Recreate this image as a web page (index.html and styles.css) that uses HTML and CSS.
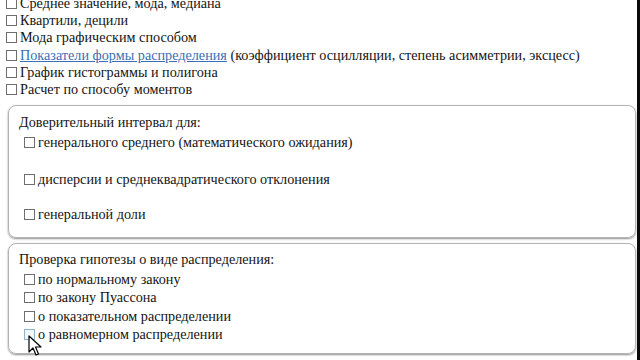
FILE: index.html
```html
<!DOCTYPE html>
<html lang="ru">
<head>
<meta charset="utf-8">
<title>Статистика</title>
<link rel="stylesheet" href="styles.css">
</head>
<body>
<div class="frame">
  <div class="page">
    <ul class="list top">
      <li><span class="cb"></span>Среднее значение, мода, медиана</li>
      <li><span class="cb"></span>Квартили, децили</li>
      <li><span class="cb"></span>Мода графическим способом</li>
      <li><span class="cb"></span><a href="#" class="link">Показатели формы распределения</a> (коэффициент осцилляции, степень асимметрии, эксцесс)</li>
      <li><span class="cb"></span>График гистограммы и полигона</li>
      <li><span class="cb"></span>Расчет по способу моментов</li>
    </ul>
    <div class="box box1">
      <div class="title">Доверительный интервал для:</div>
      <p class="item first"><span class="cb"></span>генерального среднего (математического ожидания)</p>
      <p class="item second"><span class="cb"></span>дисперсии и среднеквадратического отклонения</p>
      <p class="item third"><span class="cb"></span>генеральной доли</p>
    </div>
    <div class="box box2">
      <div class="title">Проверка гипотезы о виде распределения:</div>
      <ul class="list inner">
        <li><span class="cb"></span>по нормальному закону</li>
        <li><span class="cb"></span>по закону Пуассона</li>
        <li><span class="cb"></span>о показательном распределении</li>
        <li><span class="cb hover"></span>о равномерном распределении</li>
      </ul>
    </div>
  </div>
  <div class="edge"></div>
  <svg class="cursor" width="14" height="22" viewBox="0 0 14 22">
    <path d="M1 1 L1 17 L5 13 L8 20 L10.5 19 L7.5 12 L13 12 Z" fill="#fff" stroke="#000" stroke-width="1.2" stroke-linejoin="round"/>
  </svg>
</div>
</body>
</html>
```
FILE: styles.css
```css
html, body {
  margin: 0;
  padding: 0;
  background: #fff;
}
body {
  font-family: "Liberation Serif", "Times New Roman", serif;
  font-size: 14.2px;
  color: #141414;
  width: 640px;
  height: 360px;
  overflow: hidden;
}
.frame {
  position: relative;
  width: 640px;
  height: 360px;
  overflow: hidden;
  display: flex;
}
.page {
  flex: 1;
  margin-top: -5px;
}
.list {
  list-style: none;
  margin: 0;
  padding: 0;
}
.list li {
  height: 17.2px;
  line-height: 17.2px;
  white-space: nowrap;
}
.top {
  padding-left: 6px;
}
.cb {
  box-sizing: border-box;
  display: inline-block;
  width: 11px;
  height: 11px;
  border: 1px solid #6e6e6e;
  background: #fff;
  margin-right: 3px;
  vertical-align: -1px;
}
.cb.hover {
  border-color: #8fb3c9;
  background: #f2f8fb;
}
.link {
  color: #3a6fb5;
  text-decoration: underline;
}
.box {
  box-sizing: border-box;
  margin-left: 8px;
  width: 628px;
  border: 1px solid #b4b4b4;
  border-radius: 8px;
  box-shadow: 0 1px 2px rgba(0,0,0,0.45);
  padding-left: 10px;
}
.box1 {
  margin-top: 7px;
  height: 133px;
  padding-top: 8px;
}
.box2 {
  margin-top: 5px;
  height: 111px;
  padding-top: 7px;
}
.title {
  height: 17px;
  line-height: 17px;
}
.item {
  margin: 0;
  padding-left: 5px;
  height: 17px;
  line-height: 17px;
  white-space: nowrap;
}
.item.first { margin-top: 3px; }
.item.second { margin-top: 20px; }
.item.third { margin-top: 18px; }
.inner {
  padding-left: 5px;
  margin-top: 2px;
}
.inner li {
  height: 18.2px;
  line-height: 18.2px;
}
.edge {
  width: 3px;
  background: #0a0a0a;
  flex: none;
}
.cursor {
  position: absolute;
  left: 28px;
  top: 335px;
}
```
